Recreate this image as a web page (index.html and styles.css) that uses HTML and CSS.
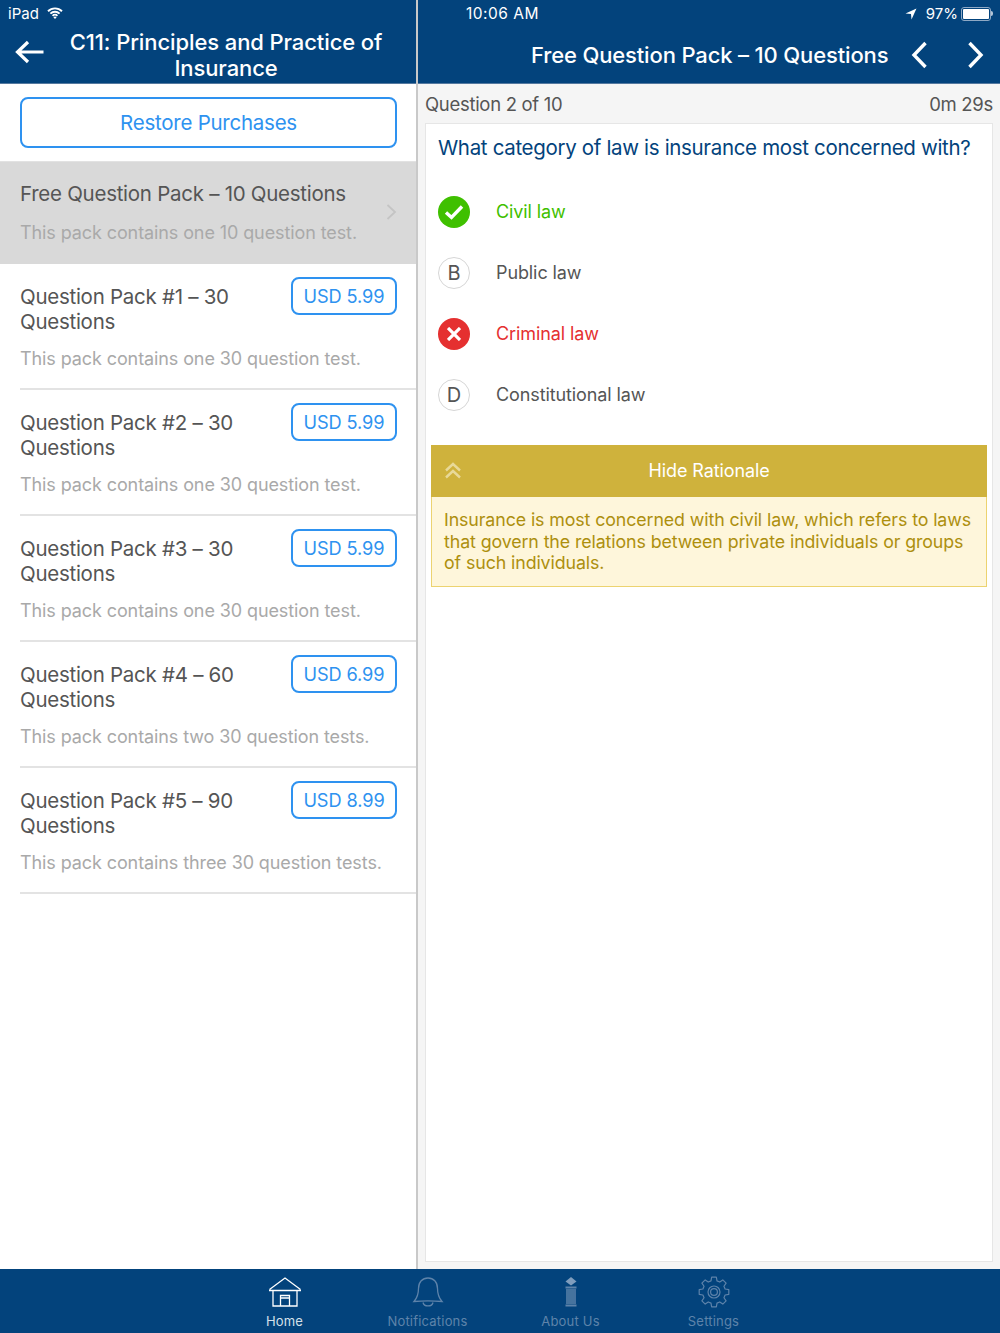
FILE: index.html
```html
<!DOCTYPE html>
<html>
<head>
<title>C11: Principles and Practice of Insurance</title>
<meta charset="utf-8">
<link rel="stylesheet" href="styles.css">
</head>
<body>
<div class="panes">
  <div class="left">
    <div class="header left-header">
      <div class="status">
        <span>iPad</span>
        <svg class="wifi" width="16" height="12" viewBox="0 0 16 12"><path d="M1 4.2a10 10 0 0 1 14 0M3.4 6.6a6.6 6.6 0 0 1 9.2 0M5.6 8.8a3.4 3.4 0 0 1 4.8 0" fill="none" stroke="#fff" stroke-width="1.9"/><path d="M8 12 6.4 10.2a2.3 2.3 0 0 1 3.2 0z" fill="#fff"/></svg>
      </div>
      <div class="title-row">
        <svg class="back" width="30" height="26" viewBox="0 0 30 26"><path d="M28.500 13H3M13 3 2.500 13 13 23" fill="none" stroke="#fff" stroke-width="3.200"/></svg>
        <div class="left-title">C11: Principles and Practice of Insurance</div>
      </div>
    </div>
    <div class="restore-wrap"><div class="btn restore">Restore Purchases</div></div>
    <div class="pack selected">
      <div class="pack-name">Free Question Pack – 10 Questions</div>
      <div class="pack-desc">This pack contains one 10 question test.</div>
      <svg class="pack-arrow" width="11" height="16" viewBox="0 0 11 16"><path d="M1.500 1 9 8 1.500 15" fill="none" stroke="#c4c4c4" stroke-width="1.800"/></svg>
    </div>
    <div class="pack">
      <div class="pack-top"><div class="pack-name">Question Pack #1 – 30 Questions</div><div class="btn price">USD 5.99</div></div>
      <div class="pack-desc">This pack contains one 30 question test.</div>
    </div>
    <div class="pack">
      <div class="pack-top"><div class="pack-name">Question Pack #2 – 30 Questions</div><div class="btn price">USD 5.99</div></div>
      <div class="pack-desc">This pack contains one 30 question test.</div>
    </div>
    <div class="pack">
      <div class="pack-top"><div class="pack-name">Question Pack #3 – 30 Questions</div><div class="btn price">USD 5.99</div></div>
      <div class="pack-desc">This pack contains one 30 question test.</div>
    </div>
    <div class="pack">
      <div class="pack-top"><div class="pack-name">Question Pack #4 – 60 Questions</div><div class="btn price">USD 6.99</div></div>
      <div class="pack-desc">This pack contains two 30 question tests.</div>
    </div>
    <div class="pack">
      <div class="pack-top"><div class="pack-name">Question Pack #5 – 90 Questions</div><div class="btn price">USD 8.99</div></div>
      <div class="pack-desc">This pack contains three 30 question tests.</div>
    </div>
  </div>

  <div class="right">
    <div class="header right-header">
      <div class="status right-status">
        <span>10:06 AM</span>
        <div class="status-end">
          <svg width="12" height="12" viewBox="0 0 12 12"><path d="M11.500.5 .5 5.500 6 6 6.500 11.500z" fill="#fff"/></svg>
          <span>97%</span>
          <div class="battery"><div class="battery-fill"></div></div>
          <div class="battery-cap"></div>
        </div>
      </div>
      <div class="right-title-row">
        <div class="right-title">Free Question Pack – 10 Questions</div>
        <svg class="nav-prev" width="18" height="28" viewBox="0 0 18 28"><path d="M15.500 2 4 14 15.500 26" fill="none" stroke="#fff" stroke-width="3.400"/></svg>
        <svg class="nav-next" width="18" height="28" viewBox="0 0 18 28"><path d="M2.500 2 14 14 2.500 26" fill="none" stroke="#fff" stroke-width="3.400"/></svg>
      </div>
    </div>
    <div class="q-info"><span>Question 2 of 10</span><span>0m 29s</span></div>
    <div class="card">
      <div class="question">What category of law is insurance most concerned with?</div>
      <div class="option correct">
        <div class="mark"><svg width="20" height="16" viewBox="0 0 20 16"><path d="M2 8.500 7.500 13.500 18 2.500" fill="none" stroke="#fff" stroke-width="3.400"/></svg></div>
        <span>Civil law</span>
      </div>
      <div class="option"><div class="mark letter">B</div><span>Public law</span></div>
      <div class="option wrong">
        <div class="mark"><svg width="14" height="14" viewBox="0 0 14 14"><path d="M1 1 13 13M13 1 1 13" fill="none" stroke="#fff" stroke-width="3.200"/></svg></div>
        <span>Criminal law</span>
      </div>
      <div class="option"><div class="mark letter">D</div><span>Constitutional law</span></div>
      <div class="rationale">
        <div class="rationale-head">
          <svg class="chevrons" width="18" height="18" viewBox="0 0 18 18"><path d="M2 8.500 9 2 16 8.500M2 15.500 9 9 16 15.500" fill="none" stroke="#e8d998" stroke-width="2.400"/></svg>
          Hide Rationale
        </div>
        <div class="rationale-body">Insurance is most concerned with civil law, which refers to laws that govern the relations between private individuals or groups of such individuals.</div>
      </div>
    </div>
  </div>
</div>

<div class="tabbar">
  <div class="tab active">
    <svg width="34" height="32" viewBox="0 0 34 32" fill="none" stroke="#fff" stroke-width="1.300"><path d="M1.500 13.500 17 2 32.500 13.500M1 14.500H33M5 15V30H29V15M12.500 30V19.500H21.500V30M12.500 22H21.500"/></svg>
    <span>Home</span>
  </div>
  <div class="tab">
    <svg width="34" height="32" viewBox="0 0 34 32" fill="none" stroke="#5e83aa" stroke-width="1.300"><path d="M3 25.500C7 21 7.500 17 7.500 12.500 7.500 6 11.500 2 17 2S26.500 6 26.500 12.500C26.500 17 27 21 31 25.500 24 24.800 10 24.800 3 25.500ZM12 26.500C13 31 21 31 22 26.500"/></svg>
    <span>Notifications</span>
  </div>
  <div class="tab">
    <svg width="34" height="32" viewBox="0 0 34 32"><path d="M17 1 22.500 5.500 17 9.500 11.500 5.500Z" fill="#7f9dbd"/><path d="M11.500 10.500H22.500V12.500H11.500ZM11.500 28.500H22.500V30.500H11.500Z" fill="#5e83aa"/><path d="M13 13V28M15 13V28M17 13V28M19 13V28M21 13V28" stroke="#5e83aa" stroke-width="1.500"/></svg>
    <span>About Us</span>
  </div>
  <div class="tab">
    <svg width="34" height="32" viewBox="0 0 34 32" fill="none" stroke="#5e83aa" stroke-width="1.200" stroke-linejoin="round"><path d="M28.100 13 31.800 13.650V18.350L28.100 19 26.960 21.750 29.100 24.800 25.800 28.100 22.750 25.960 20 27.100 19.350 30.800H14.650L14 27.100 11.250 25.960 8.200 28.100 4.900 24.800 7.040 21.750 5.900 19 2.200 18.350V13.650L5.900 13 7.040 10.250 4.900 7.200 8.200 3.900 11.250 6.040 14 4.900 14.650 1.200H19.350L20 4.900 22.750 6.040 25.800 3.900 29.100 7.200 26.960 10.250Z"/><circle cx="17" cy="16" r="6"/><circle cx="17" cy="16" r="3.400"/></svg>
    <span>Settings</span>
  </div>
</div>
</body>
</html>
```

FILE: styles.css
```css
html, body {margin:0;padding:0}
body {width:1000px;height:1333px;display:flex;flex-direction:column;overflow:hidden;background:#fff;color:#4a4a4a;font-family:Inter,"Noto Sans",sans-serif;letter-spacing:-0.1px}

.panes {display:flex;height:1269px}
.left {width:418px;box-sizing:border-box;flex:none;border-right:2px solid #c9c9c9;background:#fff}
.right {width:582px;flex:none;background:#f5f5f5;display:flex;flex-direction:column}

.header {background:#03437c;color:#fff;height:83px;border-bottom:1px solid #55799f;flex:none}
.status {height:27px;display:flex;align-items:center;font-size:15px;padding-left:8px;letter-spacing:0}
.wifi {margin-left:8px;margin-top:-2px}
.title-row {display:flex;align-items:flex-start;height:56px}
.back {margin:12px 0 0 15px;flex:none}
.left-title {width:340px;margin-left:11px;font-size:22px;font-weight:500;line-height:26px;margin-top:2px;text-align:center;letter-spacing:-0.1px}

.right-status {justify-content:space-between;padding:0 7px 0 48px;font-size:15.500px;letter-spacing:0.5px}
.status-end {display:flex;align-items:center;font-size:15px;letter-spacing:0}
.status-end span {margin:0 3px 0 9px}
.battery {width:26px;height:10px;border:1px solid #8fa9c5;border-radius:3px;padding:1px}
.battery-fill {height:100%;background:#fff;border-radius:1px}
.battery-cap {width:2px;height:5px;background:#b5c6d8;border-radius:0 2px 2px 0}
.right-title-row {display:flex;align-items:center;height:56px}
.right-title {margin-left:113px;font-size:22px;font-weight:500;white-space:nowrap;letter-spacing:-0.15px}
.nav-prev {margin-left:22px}
.nav-next {margin-left:39px}

.restore-wrap {padding:13px 19px 13px 20px;border-bottom:1px solid #e2e2e2;height:51px}
.btn {border:2px solid #2e92f0;border-radius:8px;color:#2e92f0;box-sizing:border-box;display:flex;align-items:center;justify-content:center}
.restore {height:51px;font-size:20.500px;letter-spacing:-0.25px}
.price {width:106px;height:38px;flex:none;font-size:18.200px;margin-left:16px}

.pack {height:126px;margin-left:20px;padding-top:13px;box-sizing:border-box;border-bottom:2px solid #e3e3e3}
.pack-top {display:flex;justify-content:space-between;padding-right:19px}
.pack-name {font-size:20.500px;letter-spacing:-0.27px;line-height:25px;padding-top:7px;width:250px;color:#555}
.pack-desc {font-size:18px;line-height:24px;color:#a9a9a9;margin-top:13px;white-space:nowrap}
.selected {height:102px;margin-left:0;padding:19px 0 0 20px;background:#d9d9d9;border-bottom:none;position:relative}
.selected .pack-name {padding-top:0;width:auto;white-space:nowrap}
.selected .pack-desc {margin-top:15px}
.pack-arrow {position:absolute;left:386px;top:42px}

.q-info {height:39px;display:flex;justify-content:space-between;align-items:center;padding:0 7px;font-size:18.500px;letter-spacing:-0.3px;flex:none;color:#555}
.card {flex:1;margin:0 7px 7px;background:#fff;border:1px solid #e6e6e6;padding:0 5px}
.question {color:#03437c;font-size:20.500px;letter-spacing:-0.33px;line-height:26px;padding:11px 0 0 7px;height:46px;white-space:nowrap}
.option {height:61px;display:flex;align-items:center;padding-left:7px;font-size:18px;color:#555}
.mark {width:32px;height:32px;border-radius:50%;display:flex;align-items:center;justify-content:center;flex:none;margin-right:26px;color:#fff}
.letter {box-sizing:border-box;border:1px solid #d6d6d6;color:#555;font-size:20px}
.correct {color:#3fc000}
.correct .mark {background:#3fc000}
.wrong {color:#e53030}
.wrong .mark {background:#e53030}

.rationale {margin-top:20px}
.rationale-head {height:52px;padding-bottom:2px;box-sizing:border-box;background:#cfb23c;color:#fff;font-size:18px;display:flex;align-items:center;justify-content:center;position:relative}
.chevrons {position:absolute;left:13px;top:17px}
.rationale-body {background:#fef6db;border:1px solid #ecd370;border-top:none;color:#ad8f0e;font-size:17.800px;line-height:21.500px;padding:12px 8px 12px 12px;box-sizing:border-box;height:90px}

.tabbar {height:64px;background:#03437c;display:flex;padding-left:213px;box-sizing:border-box;flex:none}
.tab {width:143px;display:flex;flex-direction:column;align-items:center;color:#5e83aa;font-size:13px;letter-spacing:0.2px;padding-top:7px}
.tab svg {display:block;height:32px;flex:none}
.tab span {margin-top:5px}
.tab.active {color:#d5e0ea}
```
